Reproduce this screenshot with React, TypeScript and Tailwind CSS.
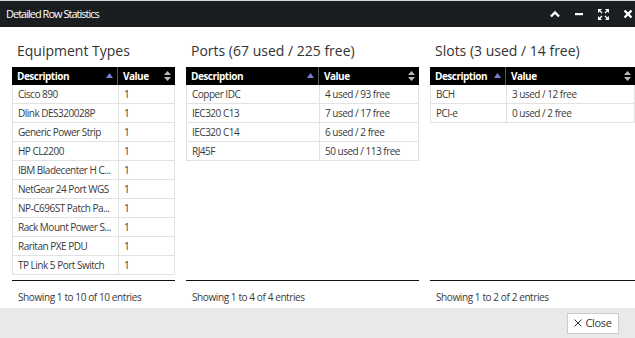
type Row = [string, string];

const equipment: Row[] = [
  ["Cisco 890", "1"],
  ["Dlink DES320028P", "1"],
  ["Generic Power Strip", "1"],
  ["HP CL2200", "1"],
  ["IBM Bladecenter H C...", "1"],
  ["NetGear 24 Port WGS", "1"],
  ["NP-C696ST Patch Pa...", "1"],
  ["Rack Mount Power S...", "1"],
  ["Raritan PXE PDU", "1"],
  ["TP Link 5 Port Switch", "1"],
];

const ports: Row[] = [
  ["Copper IDC", "4 used / 93 free"],
  ["IEC320 C13", "7 used / 17 free"],
  ["IEC320 C14", "6 used / 2 free"],
  ["RJ45F", "50 used / 113 free"],
];

const slots: Row[] = [
  ["BCH", "3 used / 12 free"],
  ["PCI-e", "0 used / 2 free"],
];

function SortUp() {
  return (
    <svg width="7" height="6" viewBox="0 0 7 6">
      <path d="M3.5 0 L7 5 L0 5 Z" fill="#7b7fd6" />
    </svg>
  );
}

function SortBoth() {
  return (
    <svg width="7" height="10" viewBox="0 0 7 10">
      <path d="M3.5 0 L7 4 L0 4 Z" fill="#bbbbbb" />
      <path d="M0 6 L7 6 L3.5 10 Z" fill="#bbbbbb" />
    </svg>
  );
}

interface StatTableProps {
  title: string;
  rows: Row[];
  width: string;
  descWidth: string;
  footer: string;
}

function StatTable({ title, rows, width, descWidth, footer }: StatTableProps) {
  return (
    <div className={`flex shrink-0 flex-col ${width}`}>
      <div className="flex h-[40px] items-end pb-[6px] pl-[5px] text-[14px] leading-[20px] text-[#333]">{title}</div>
      <div className="h-[214px] border-b border-[#111]">
        <div className="flex h-[18px] bg-black text-[10px] font-bold tracking-[-0.05em] text-white">
          <div className={`flex shrink-0 items-center justify-between border-r border-[#555] pl-[5px] pr-[4px] ${descWidth}`}>
            <span>Description</span>
            <SortUp />
          </div>
          <div className="flex flex-1 items-center justify-between pl-[5px] pr-[4px]">
            <span>Value</span>
            <SortBoth />
          </div>
        </div>
        <div className="border-x border-[#e2e2e2]">
          {rows.map((r) => (
            <div key={r[0]} className="flex h-[19px] border-b border-[#e2e2e2] text-[10px] tracking-[-0.05em] text-[#3a3a3a]">
              <div className={`flex shrink-0 items-center whitespace-nowrap border-r border-[#e2e2e2] pl-[5px] ${descWidth}`}>{r[0]}</div>
              <div className="flex flex-1 items-center whitespace-nowrap pl-[5px]">{r[1]}</div>
            </div>
          ))}
        </div>
      </div>
      <div className="pl-[6px] pt-[8px] text-[10px] leading-[17px] tracking-[-0.04em] text-[#3a3a3a]">{footer}</div>
    </div>
  );
}

export default function App() {
  return (
    <div className="flex h-[338px] w-[635px] flex-col overflow-hidden bg-white" style={{ fontFamily: "'Open Sans', sans-serif" }}>
      <div className="h-[1px] bg-[#d8d8d8]" />
      <div className="flex h-[26px] shrink-0 items-center bg-[#1b1e21] pl-[6px] pr-[2px] text-white">
        <span className="text-[11px] tracking-[-0.09em]">Detailed Row Statistics</span>
        <div className="ml-auto flex items-center gap-[14px]">
          <svg width="10" height="8" viewBox="0 0 10 8">
            <path d="M1 6.5 L5 2.5 L9 6.5" stroke="white" strokeWidth="2.4" fill="none" />
          </svg>
          <svg width="10" height="8" viewBox="0 0 10 8">
            <rect x="1" y="3" width="8" height="2.2" fill="white" />
          </svg>
          <svg width="11" height="11" viewBox="0 0 11 11">
            <path d="M0 0 H4 L0 4 Z M11 0 V4 L7 0 Z M11 11 H7 L11 7 Z M0 11 V7 L4 11 Z" fill="white" />
            <path d="M1.5 1.5 L4 4 M9.5 1.5 L7 4 M9.5 9.5 L7 7 M1.5 9.5 L4 7" stroke="white" strokeWidth="1.4" />
          </svg>
          <svg width="10" height="10" viewBox="0 0 10 10">
            <path d="M1.5 1.5 L8.5 8.5 M8.5 1.5 L1.5 8.5" stroke="white" strokeWidth="2.4" />
          </svg>
        </div>
      </div>
      <div className="flex h-[281px] shrink-0 gap-[11px] pl-[12px]">
        <StatTable title="Equipment Types" rows={equipment} width="w-[163px]" descWidth="w-[106px]" footer="Showing 1 to 10 of 10 entries" />
        <StatTable title="Ports (67 used / 225 free)" rows={ports} width="w-[233px]" descWidth="w-[133px]" footer="Showing 1 to 4 of 4 entries" />
        <StatTable title="Slots (3 used / 14 free)" rows={slots} width="w-[205px]" descWidth="w-[76px]" footer="Showing 1 to 2 of 2 entries" />
      </div>
      <div className="flex flex-1 items-center justify-end bg-[#e9e9e9] pr-[16px]">
        <button className="flex h-[21px] w-[52px] items-center justify-center gap-[3px] border border-[#cccccc] bg-white text-[11px] tracking-[-0.03em] text-[#333]">
          <svg width="8" height="8" viewBox="0 0 8 8">
            <path d="M0.5 0.5 L7.5 7.5 M7.5 0.5 L0.5 7.5" stroke="#333" strokeWidth="1" />
          </svg>
          Close
        </button>
      </div>
    </div>
  );
}
